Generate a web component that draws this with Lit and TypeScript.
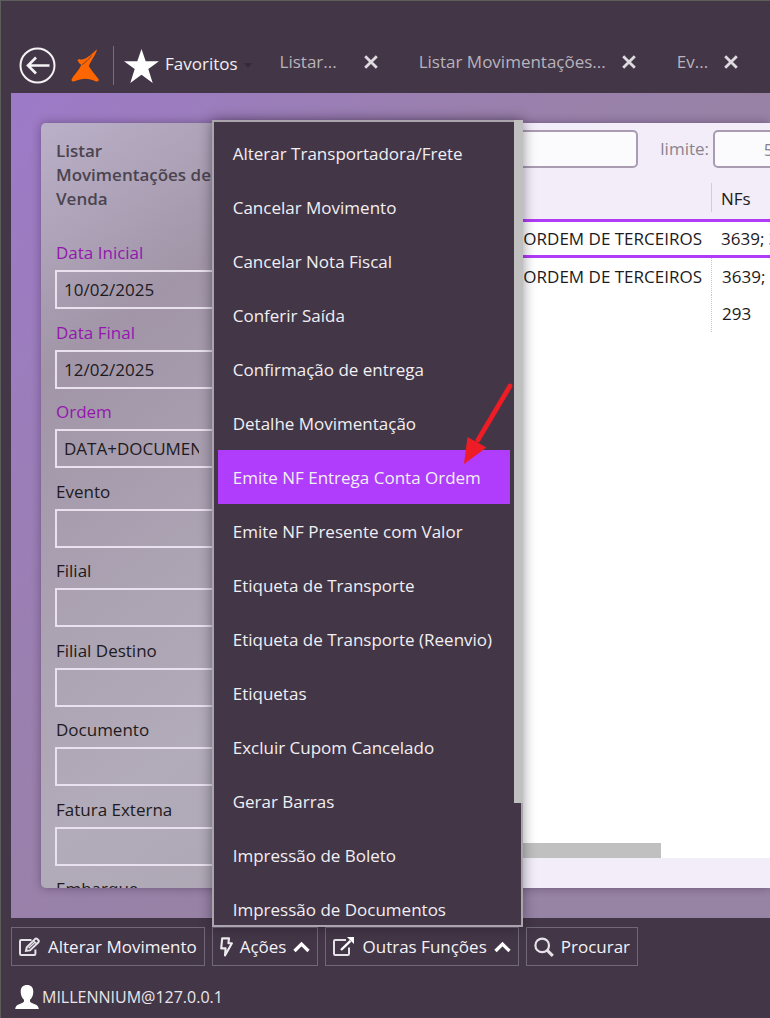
import { LitElement, html, css, svg } from "lit";
import { customElement, state } from "lit/decorators.js";
import { classMap } from "lit/directives/class-map.js";

interface Field {
  id: string;
  label: string;
  value?: string;
  required?: boolean;
  options?: string[];
}

const FIELDS: Field[] = [
  { id: "data-inicial", label: "Data Inicial", value: "10/02/2025", required: true },
  { id: "data-final", label: "Data Final", value: "12/02/2025", required: true },
  { id: "ordem", label: "Ordem", required: true, options: ["DATA+DOCUMENTO"] },
  { id: "evento", label: "Evento" },
  { id: "filial", label: "Filial" },
  { id: "filial-destino", label: "Filial Destino" },
  { id: "documento", label: "Documento" },
  { id: "fatura-externa", label: "Fatura Externa" },
  { id: "embarque", label: "Embarque" },
];

const MENU = [
  "Alterar Transportadora/Frete",
  "Cancelar Movimento",
  "Cancelar Nota Fiscal",
  "Conferir Saída",
  "Confirmação de entrega",
  "Detalhe Movimentação",
  "Emite NF Entrega Conta Ordem",
  "Emite NF Presente com Valor",
  "Etiqueta de Transporte",
  "Etiqueta de Transporte (Reenvio)",
  "Etiquetas",
  "Excluir Cupom Cancelado",
  "Gerar Barras",
  "Impressão de Boleto",
  "Impressão de Documentos",
];

const TABS = ["Listar...", "Listar Movimentações...", "Ev..."];

const ROWS = [
  { evento: "ORDEM DE TERCEIROS", nfs: "3639; 3640" },
  { evento: "ORDEM DE TERCEIROS", nfs: "3639; 3640" },
  { evento: "", nfs: "293" },
];

const closeIcon = html`<svg width="14" height="14" viewBox="0 0 14 14" aria-hidden="true">
  ${svg`<path d="M1.2 1.2 12.8 12.8M12.8 1.2 1.2 12.8" stroke="#dedbe0" stroke-width="2.800" fill="none"/>`}
</svg>`;

const chevron = html`<svg width="17" height="12" viewBox="0 0 17 12" aria-hidden="true">
  ${svg`<path d="M1.5 10 8.5 3 15.5 10" stroke="#fff" stroke-width="3.200" fill="none"/>`}
</svg>`;

const editIcon = html`<svg width="22" height="20" viewBox="0 0 22 20" aria-hidden="true">
  ${svg`<g fill="none" stroke="#e6e3e8" stroke-width="2">
    <path d="M12.5 3H2.200Q1 3 1 4.200V16.800Q1 18 2.200 18H15.2Q16.4 18 16.4 16.8V12.5"/>
    <path d="M7 13.8 7.8 10.2 16.2 1.9Q17.2 1.1 18.2 2L19.4 3.2Q20.3 4.2 19.4 5.2L11 13.4Z" stroke-width="2"/>
    <path d="M14.5 3.8 17.6 6.8M9.6 11.2 15.6 5.4" stroke-width="1.4"/></g>`}
</svg>`;

const boltIcon = html`<svg width="13" height="20" viewBox="0 0 13 20" aria-hidden="true">
  ${svg`<path d="M2.200 1.400H9L8.400 6.200H11.900L5 18.400 5.600 11.400H1.200Z" fill="none" stroke="#eeebf0" stroke-width="2.100" stroke-linejoin="round"/>`}
</svg>`;

const externalIcon = html`<svg width="22" height="20" viewBox="0 0 22 20" aria-hidden="true">
  ${svg`<path d="M13 3H2.200Q1 3 1 4.200V16.800Q1 18 2.200 18H14.8Q16 18 16 16.8V10.5" fill="none" stroke="#e6e3e8" stroke-width="2"/>
    <path d="M8 13 17.5 3.8" stroke="#fff" stroke-width="2.4"/><path d="M14 0H21V7Z" fill="#fff"/>`}
</svg>`;

const searchIcon = html`<svg width="20" height="20" viewBox="0 0 20 20" aria-hidden="true">
  ${svg`<circle cx="8.2" cy="8.4" r="6.8" fill="none" stroke="#e6e3e8" stroke-width="2.2"/><path d="M13 13.2 18.8 18.8" stroke="#e6e3e8" stroke-width="3"/>`}
</svg>`;

@customElement("app-root")
export class AppRoot extends LitElement {
  @state() private active = 6;

  static styles = css`
    :host {
      display: block;
      height: 100vh;
      overflow: hidden;
      font: 17px/24px "Open Sans", "Noto Sans", sans-serif;
      color: #1d1a20;
    }
    * { box-sizing: border-box; }
    button, input, select { font: inherit; color: inherit; margin: 0; border-radius: 0; }
    button { background: none; border: 0; padding: 0; text-align: left; white-space: nowrap; }
    svg { display: block; flex: none; }

    .window {
      display: flex;
      flex-direction: column;
      height: 100%;
      background: #433647;
      border-top: 1px solid #5c5e5c;
      border-left: 1px solid #5c5e5c;
      padding-left: 10px;
      position: relative;
    }
    .header {
      flex: none;
      height: 92px;
      padding: 45px 0 8px 8px;
      display: flex;
      align-items: center;
      overflow: hidden;
    }
    .logo { margin-left: 15px; }
    .rule { flex: none; width: 1px; height: 39px; background: #77707a; margin: 0 10px 0 14px; }
    .favorites { display: flex; align-items: center; gap: 6px; color: #f1eff2; font-weight: 500; }
    .favorites span { padding-bottom: 3px; }
    .tabs { display: flex; align-items: center; margin: 0 0 7px 28px; }
    .tab { display: flex; align-items: center; gap: 16px; margin-right: 41px; color: #b9b3bb; }
    .tab:first-child { gap: 27px; }

    .workspace {
      flex: 1;
      min-height: 0;
      padding: 30px 0 30px 30px;
      display: flex;
      overflow: hidden;
      background: linear-gradient(125deg, #9d7ac8 0%, #9a80ae 35%, #9783a4 60%, #9783a4 100%);
    }
    .panel {
      flex: 1;
      min-width: 0;
      display: flex;
      border-radius: 5px 0 0 5px;
      box-shadow: 0 0 10px rgba(40, 20, 50, 0.4);
      overflow: hidden;
    }
    .sidebar {
      flex: none;
      width: 200px;
      padding: 16px 14px 0;
      overflow: hidden;
      background: linear-gradient(145deg, #bab0c8 0%, #a195a7 28%, #a99fb0 50%, #b2abb9 80%, #aea7b4 100%);
    }
    .title { margin: 0 1px; font-size: 17px; line-height: 24px; font-weight: 600; color: #4b444f; }
    .fields { display: flex; flex-direction: column; margin-top: 30px; }
    .field { display: flex; flex-direction: column; gap: 5px; margin-bottom: 11px; }
    .field:nth-child(odd) { margin-bottom: 12px; }
    .field label { line-height: 24px; padding: 0 1px; }
    .field.required label { color: #9416ae; }
    .field input, .field select {
      width: 100%;
      height: 39px;
      padding: 0 26px 0 7px;
      border: 2px solid #e9e2ee;
      background: transparent;
      appearance: none;
      outline: 0;
    }

    .main { flex: 1; min-width: 0; display: flex; flex-direction: column; background: #f2edf8; overflow: hidden; }
    .toolbar { flex: none; display: flex; align-items: center; padding: 7px 0 0 8px; width: calc(100% + 32px); color: #8a838d; }
    .toolbar input {
      height: 38px;
      border: 2px solid #a99cb2;
      border-radius: 5px;
      background: #fbfafd;
      padding: 0 7px;
      min-width: 0;
    }
    .toolbar label { margin: 0 4px 0 22px; }
    .search { flex: 1; }
    .toolbar .limit { width: 89px; text-align: right; }
    .grid { flex: 1; min-height: 0; background: #fff; display: flex; flex-direction: column; justify-content: space-between; }
    table { width: 100%; table-layout: fixed; border-collapse: separate; border-spacing: 0; }
    .nfs { width: 59px; }
    th, td { padding: 0 9px; font-weight: 400; text-align: left; white-space: nowrap; overflow: hidden; }
    th { height: 51px; padding-top: 10px; background: #f2edf8; }
    th + th { background: linear-gradient(#d3cdd7, #d3cdd7) 0 15px / 1px 29px no-repeat #f2edf8; }
    td { height: 37px; }
    td:first-child { text-align: right; }
    tbody tr + tr td + td { border-left: 1px dotted #c8c4ca; }
    .current td { height: 39px; border-top: 3px solid #b13cf7; border-bottom: 3px solid #b13cf7; }
    td + td, th + th { padding: 0 0 0 10px; }
    th + th { padding-top: 10px; }
    .hbar { width: calc(100% - 109px); height: 15px; background: #c0c0c0; }
    .footer { flex: none; height: 30px; }

    .actions { flex: none; display: flex; gap: 7px; padding-top: 9px; }
    .anchor { position: relative; }
    .action {
      display: flex;
      align-items: center;
      gap: 7px;
      height: 39px;
      padding: 0 7px;
      border: 1px solid #71677a;
      color: #f4f2f5;
      font-weight: 500;
    }
    .menu {
      position: absolute;
      z-index: 2;
      left: 0;
      bottom: 100%;
      width: 311px;
      height: calc(100vh - 211px);
      border: 2px solid #aaa5ac;
      background: #433647;
      box-shadow: 0 0 12px rgba(20, 10, 25, 0.45);
    }
    .scroll { height: 100%; overflow: hidden; }
    .list { list-style: none; margin: 0; padding: 4px 11px 0 4px; }
    .item { display: block; width: 100%; height: 54px; padding: 2px 15px 0; color: #f1eff2; font-weight: 500; }
    .item.active { background: #b03cfc; }
    .thumb { position: absolute; top: -2px; right: -2px; width: 9px; height: 85%; background: #c0c0c0; }
    .pointer { position: absolute; z-index: 3; left: 244px; top: 259px; pointer-events: none; }

    .status { flex: none; display: flex; align-items: center; gap: 3px; height: 52px; padding: 10px 0 0 4px; color: #e9e6ea; font-size: 16px; }
  `;

  private renderField(f: Field) {
    return html`<div class=${classMap({ field: true, required: !!f.required })}>
      <label for=${f.id}>${f.label}</label>
      ${f.options
        ? html`<select id=${f.id}>${f.options.map((o) => html`<option>${o}</option>`)}</select>`
        : html`<input id=${f.id} type="text" .value=${f.value ?? ""} />`}
    </div>`;
  }

  private renderMenu() {
    return html`<div class="menu">
      <div class="scroll">
        <ul class="list">
          ${MENU.map(
            (m, i) => html`<li>
              <button class=${classMap({ item: true, active: i === this.active })} @mouseenter=${() => (this.active = i)}>${m}</button>
            </li>`,
          )}
        </ul>
      </div>
      <div class="thumb"></div>
      <svg class="pointer" width="56" height="90" viewBox="0 0 56 90" aria-hidden="true">
        <path d="M52 5 20 59" stroke="#ee1c24" stroke-width="4.8" stroke-linecap="round" />
        <path d="M6 83 9.500 56 28.500 66.500Z" fill="#ee1c24" />
      </svg>
    </div>`;
  }

  render() {
    return html`<div class="window">
      <header class="header">
        <button aria-label="Voltar">
          <svg width="37" height="37" viewBox="0 0 37 37" aria-hidden="true">
            <circle cx="18.500" cy="18.500" r="17" fill="none" stroke="#f4f2f5" stroke-width="2" />
            <path d="M30.500 18.500H8.500M17 10.500 9 18.500 17 26.500" fill="none" stroke="#f4f2f5" stroke-width="2.600" />
          </svg>
        </button>
        <svg class="logo" width="28" height="34" viewBox="0 0 28 34" aria-hidden="true">
          <path d="M25.500 0.500C22 4.500 16 9 13 10 10 10.800 8 10.200 6.200 10.800 7.500 12.500 8 14.800 10.200 15.800 9 20.500 2 27 0.600 30.500 0.200 32.300 1.500 32.900 3.500 32.200 11 28.800 18 28.800 24.500 32.200 27 33 28.300 31.800 27.500 30 25 26.500 20.500 21.500 17.800 17.200 19.500 12.500 24.500 6 25.800 1.500Z" fill="#ff6600" />
          <path d="M20.500 6.500C18 10 14.500 13.500 10.800 15.800" stroke="#7d4438" stroke-width="1" fill="none" />
        </svg>
        <div class="rule"></div>
        <button class="favorites">
          <svg width="35" height="34" viewBox="0 0 35 34" aria-hidden="true">
            <path d="M17.500 0 21.700 12.200H35L24.300 20.100 28.700 34 17.500 25.700 6.300 34 10.700 20.100 0 12.200H13.300Z" fill="#fff" />
          </svg>
          <span>Favoritos</span>
          <svg width="8" height="5" viewBox="0 0 8 5" aria-hidden="true"><path d="M0 0H8L4 5Z" fill="#352a38" /></svg>
        </button>
        <nav class="tabs">
          ${TABS.map(
            (t) => html`<div class="tab">
              <button>${t}</button><button aria-label="Fechar">${closeIcon}</button>
            </div>`,
          )}
        </nav>
      </header>

      <div class="workspace">
        <div class="panel">
          <aside class="sidebar">
            <h1 class="title">Listar Movimentações de Venda</h1>
            <form class="fields">${FIELDS.map((f) => this.renderField(f))}</form>
          </aside>
          <main class="main">
            <div class="toolbar">
              <input class="search" type="text" aria-label="Pesquisar" />
              <label for="limite">limite:</label>
              <input class="limit" id="limite" type="text" value="500" />
            </div>
            <div class="grid">
              <table>
                <thead>
                  <tr><th></th><th class="nfs">NFs</th></tr>
                </thead>
                <tbody>
                  ${ROWS.map(
                    (r, i) => html`<tr class=${classMap({ current: i === 0 })}><td>${r.evento}</td><td>${r.nfs}</td></tr>`,
                  )}
                </tbody>
              </table>
              <div class="hbar"></div>
            </div>
            <div class="footer"></div>
          </main>
        </div>
      </div>

      <div class="actions">
        <button class="action">${editIcon}<span>Alterar Movimento</span></button>
        <div class="anchor">
          <button class="action">${boltIcon}<span>Ações</span>${chevron}</button>
          ${this.renderMenu()}
        </div>
        <button class="action">${externalIcon}<span>Outras Funções</span>${chevron}</button>
        <button class="action">${searchIcon}<span>Procurar</span></button>
      </div>
      <footer class="status">
        <svg width="24" height="24" viewBox="0 0 24 24" aria-hidden="true">
          <path d="M12 0C16 0 18.500 2.500 18.300 7 18.100 11 16.800 13 15 14.800V16.500C16 19 23.500 18.500 23.800 24H0.200C0.500 18.500 8 19 9 16.500V14.800C7.200 13 5.900 11 5.700 7 5.500 2.500 8 0 12 0Z" fill="#fff" />
        </svg>
        <span>MILLENNIUM@127.0.0.1</span>
      </footer>
    </div>`;
  }
}
